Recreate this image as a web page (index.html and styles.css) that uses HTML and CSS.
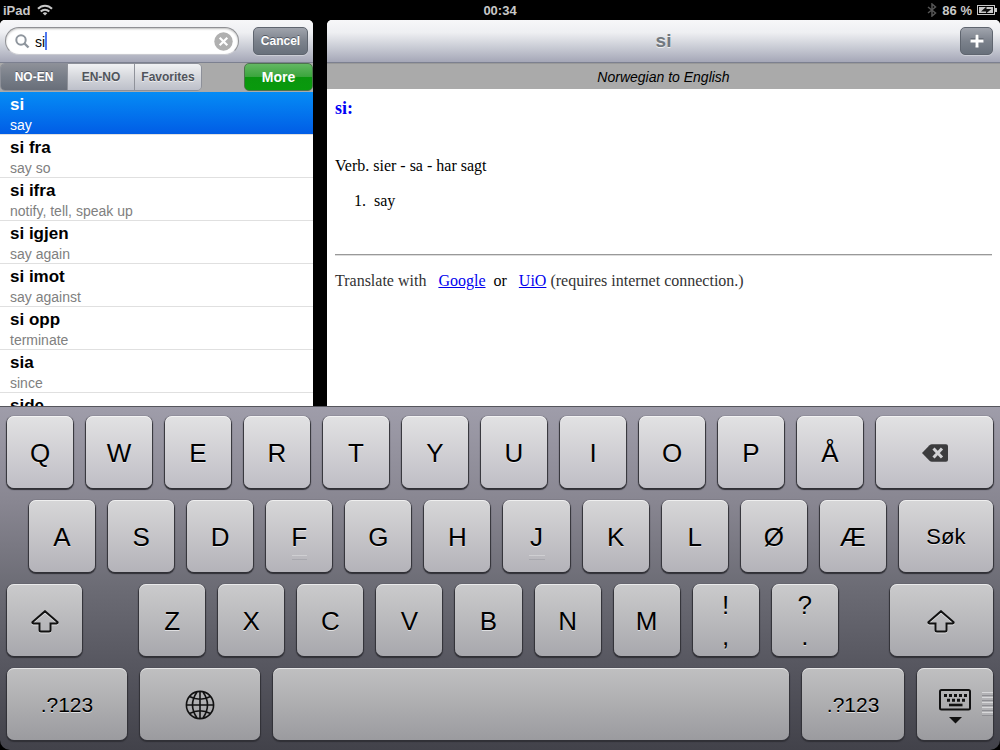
FILE: index.html
```html
<!DOCTYPE html>
<html lang="en">
<head>
<meta charset="utf-8">
<title>Norwegian to English</title>
<link rel="stylesheet" href="styles.css">
</head>
<body>
<div class="status">
  <div class="status-left"><span>iPad</span>
    <svg width="16" height="12" viewBox="0 0 16 12" fill="none" stroke="#c8c8c8" stroke-width="2"><path d="M1 4.800C5 0.600 11 0.600 15 4.800M3.700 7.500C6.200 5 9.800 5 12.300 7.500"/><path d="M8 11.600L5.700 9.300Q8 7.400 10.300 9.300Z" fill="#c8c8c8" stroke="none"/></svg>
  </div>
  <span>00:34</span>
  <div class="status-right">
    <svg width="10" height="14" viewBox="0 0 10 14" fill="none" stroke="#555" stroke-width="1.500"><path d="M1 4L8.500 10L5 13V1L8.500 4L1 10"/></svg>
    <span>86 %</span>
    <svg width="20" height="10" viewBox="0 0 20 10"><rect x=".5" y=".5" width="17" height="9" fill="none" stroke="#c8c8c8"/><path d="M2 2H16V8H2Z" fill="#c8c8c8"/><path d="M18 3h2v4h-2z" fill="#c8c8c8"/><path d="M4 6.500L9.500 1.500V4H14.500L9 8.500V6.500Z" fill="#111"/></svg>
  </div>
</div>

<div class="panes">
  <section class="sidebar">
    <form class="bar search-bar">
      <div class="search">
        <svg width="15" height="15" viewBox="0 0 15 15" fill="none" stroke="#8e959d" stroke-width="2"><circle cx="6" cy="6" r="4.700"/><path d="M9.500 9.500L13.500 13.500" stroke-width="2.400"/></svg>
        <div class="entry"><input type="text" value="si" aria-label="Search"><i class="caret"></i></div>
        <button type="button" class="clear" aria-label="Clear"><svg width="19" height="19" viewBox="0 0 19 19"><circle cx="9.500" cy="9.500" r="9.200" fill="#b0b0b0"/><path d="M5.700 5.700L13.300 13.300M13.300 5.700L5.700 13.300" stroke="#fff" stroke-width="2.200"/></svg></button>
      </div>
      <button type="button" class="dark-button">Cancel</button>
    </form>
    <div class="scopes">
      <div class="segments"><button class="selected">NO-EN</button><button>EN-NO</button><button>Favorites</button></div>
      <button class="more">More</button>
    </div>
    <ul class="words">
      <li class="active"><b>si</b><span>say</span></li>
      <li><b>si fra</b><span>say so</span></li>
      <li><b>si ifra</b><span>notify, tell, speak up</span></li>
      <li><b>si igjen</b><span>say again</span></li>
      <li><b>si imot</b><span>say against</span></li>
      <li><b>si opp</b><span>terminate</span></li>
      <li><b>sia</b><span>since</span></li>
      <li><b>side</b></li>
    </ul>
  </section>

  <main class="detail">
    <header class="bar title-bar"><h1>si</h1><button class="dark-button add" aria-label="Add"><svg width="14" height="14" viewBox="0 0 14 14" stroke-width="3"><path d="M7 -.500V12M.500 6H13.500" stroke="#4f555f"/><path d="M7 .500V13.500M.500 7H13.500" stroke="#fff"/></svg></button></header>
    <div class="direction">Norwegian to English</div>
    <article class="entry-text">
      <h2>si:</h2>
      <p>Verb. sier - sa - har sagt</p>
      <ol><li>say</li></ol>
      <hr>
      <p class="translate">Translate with &nbsp; <a href="#google">Google</a> &nbsp;<span>or</span> &nbsp; <a href="#uio">UiO</a> (requires internet connection.)</p>
    </article>
  </main>
</div>

<div class="desk">
<div class="keyboard">
  <div class="row row1">
    <button>Q</button><button>W</button><button>E</button><button>R</button><button>T</button><button>Y</button><button>U</button><button>I</button><button>O</button><button>P</button><button>Å</button>
    <button class="w117" aria-label="Delete"><svg width="26" height="18" viewBox="0 0 26 18"><path d="M0 9L7.500 1.200Q8.500 .300 10 .300H24Q26 .300 26 2.300V15.700Q26 17.700 24 17.700H10Q8.500 17.700 7.500 16.800Z" fill="#3c3c3e"/><path d="M11.500 4.500L20 13.500M20 4.500L11.500 13.500" stroke="#d2d2d5" stroke-width="3"/></svg></button>
  </div>
  <div class="row row2">
    <button>A</button><button>S</button><button>D</button><button class="bump">F</button><button>G</button><button>H</button><button class="bump">J</button><button>K</button><button>L</button><button>Ø</button><button>Æ</button>
    <button class="w94 small">Søk</button>
  </div>
  <div class="row row3">
    <button class="w75" aria-label="Shift"><svg class="shift" width="28" height="23" viewBox="0 0 28 23"><path d="M14 1.200L26.500 12Q27 13.200 25.500 13.500H19.500V20Q19.500 21.500 18 21.500H10Q8.500 21.500 8.500 20V13.500H2.500Q1 13.200 1.500 12Z"/></svg></button>
    <i class="gap31"></i>
    <button>Z</button><button>X</button><button>C</button><button>V</button><button>B</button><button>N</button><button>M</button><button class="pair"><span>!</span><span>,</span></button><button class="pair"><span>?</span><span>.</span></button>
    <i class="gap26"></i>
    <button class="w103" aria-label="Shift"><svg class="shift" width="28" height="23" viewBox="0 0 28 23"><path d="M14 1.200L26.500 12Q27 13.200 25.500 13.500H19.500V20Q19.500 21.500 18 21.500H10Q8.500 21.500 8.500 20V13.500H2.500Q1 13.200 1.500 12Z"/></svg></button>
  </div>
  <div class="row row4">
    <button class="w120 numeric">.?123</button>
    <button class="w120" aria-label="Next keyboard"><svg width="30" height="30" viewBox="0 0 30 30" fill="none" stroke="#111" stroke-width="1.600"><circle cx="15" cy="15" r="13.600"/><path d="M15 1.400V28.600M1.400 15H28.600M12 2Q3 15 12 28M18 2Q27 15 18 28M4.500 6.500Q15 12 25.500 6.500M4.500 23.500Q15 18 25.500 23.500"/></svg></button>
    <button class="w517" aria-label="Space"></button>
    <button class="w102 numeric">.?123</button>
    <button class="w76 hide" aria-label="Hide keyboard"><svg width="32" height="36" viewBox="0 0 32 36"><rect x="1" y="1" width="30" height="19.500" rx="1.500" fill="none" stroke="#111" stroke-width="2"/><path d="M5 6.500H28M8 11.300H27" stroke="#111" stroke-width="3" stroke-dasharray="3 2"/><path d="M10 16H23.500" stroke="#111" stroke-width="2.600"/><path d="M10 28H23L16.500 34.500Z" fill="#111"/></svg><i class="grip"></i></button>
  </div>
</div>
</div>
</body>
</html>
```
FILE: styles.css
```css
* { box-sizing: border-box; }
body {
  margin: 0;
  height: 100vh;
  display: flex;
  flex-direction: column;
  overflow: hidden;
  background: #000;
  font-family: "Liberation Sans", Arial, sans-serif;
}
button { border: 0; margin: 0; padding: 0; font-family: inherit; color: inherit; }
svg { display: block; }

.status {
  flex: none;
  height: 20px;
  padding: 0 3px;
  display: grid;
  grid-template-columns: 1fr auto 1fr;
  align-items: center;
  color: #c8c8c8;
  font-size: 13px;
  font-weight: bold;
}
.status-left, .status-right { display: flex; align-items: center; gap: 7px; }
.status-right { justify-content: flex-end; gap: 5px; }

.panes { flex: 1; min-height: 0; display: flex; gap: 14px; }
.sidebar {
  width: 313px;
  display: flex;
  flex-direction: column;
  overflow: hidden;
  background: #fff;
  border-radius: 5px 5px 0 0;
}
.detail { flex: 1; background: #fff; border-radius: 5px 5px 0 0; overflow: hidden; }
.bar {
  height: 43px;
  display: flex;
  align-items: center;
  border-bottom: 1px solid #7c8090;
  background: linear-gradient(#f7f7f9, #eeeff2 30%, #c9ccd5 65%, #a5a7b7);
}
.search-bar { flex: none; margin: 0; padding: 0 5px; gap: 14px; }
.search {
  flex: 1;
  height: 28px;
  padding: 0 5px 0 9px;
  display: flex;
  align-items: center;
  gap: 5px;
  border: 1px solid #8f9094;
  border-bottom-color: #c9cad0;
  border-radius: 14px;
  background: #fff;
  box-shadow: inset 0 1px 2px #8888;
}
.entry { flex: 1; position: relative; }
.entry input {
  display: block;
  width: 100%;
  padding: 2px 0 0 0;
  border: 0;
  outline: 0;
  background: none;
  color: #000;
  font: 14px "Liberation Sans", Arial, sans-serif;
}
.caret { position: absolute; left: 10px; top: 0; width: 2px; height: 18px; background: #5078f0; }
.clear { background: none; }
.dark-button {
  width: 55px;
  height: 28px;
  border: 1px solid #5f656f;
  border-radius: 5px;
  background: linear-gradient(#a0a4ad, #7c828c 50%, #68707b);
  box-shadow: 0 1px 0 #ccced6;
  color: #fff;
  font-size: 12px;
  font-weight: bold;
  text-shadow: 0 -1px 0 #555b66;
}
.scopes {
  flex: none;
  height: 29px;
  display: flex;
  justify-content: space-between;
  background: #aaa;
}
.segments {
  width: 202px;
  height: 28px;
  display: flex;
  border: 1px solid #8d9099;
  border-radius: 5px;
  overflow: hidden;
}
.segments button {
  flex: 1;
  border-left: 1px solid #8f929a;
  background: linear-gradient(#f0f1f3, #d5d7dc 50%, #bdc0ca);
  color: #50545c;
  font-size: 12px;
  font-weight: bold;
  text-shadow: 0 1px 0 #eee;
}
.segments .selected {
  border-left: 0;
  background: linear-gradient(#8d9098, #787e88 50%, #686e79);
  color: #fff;
  text-shadow: 0 -1px 0 #555b66;
}
.more {
  width: 69px;
  height: 28px;
  border: 1px solid #4c744c;
  border-radius: 5px;
  background: linear-gradient(#63b763, #3aa53c 50%, #0a960e 51%, #099a0d);
  color: #fff;
  font-size: 14px;
  font-weight: bold;
}
.words { margin: 0; padding: 0; list-style: none; }
.words li {
  height: 43px;
  padding: 3px 10px 0;
  border-bottom: 1px solid #e0e0e0;
}
.words b, .words span { display: block; }
.words b { color: #000; font-size: 17px; line-height: 20px; }
.words span { color: #808080; font-size: 14px; line-height: 20px; }
.words .active { background: linear-gradient(#058cf5, #015de6); }
.words .active b, .words .active span { color: #fff; }

.title-bar { padding: 0 7px; display: grid; grid-template-columns: 33px 1fr 33px; }
.title-bar h1 {
  grid-column: 2;
  margin: 0;
  text-align: center;
  color: #72787f;
  font-size: 19px;
  text-shadow: 0 1px 0 #eee;
}
.add { width: 33px; display: grid; place-items: center; }
.direction {
  height: 26px;
  border-top: 1px solid #999;
  background: #aaa;
  text-align: center;
  font-size: 14px;
  font-style: italic;
  line-height: 26px;
}
.entry-text {
  padding: 9px 8px;
  color: #000;
  font: 16px/18px "Liberation Serif", "Times New Roman", serif;
}
.entry-text h2 { margin: 0 0 39px; color: #0000f5; font-size: 18px; line-height: 20px; }
.entry-text p { margin: 0; }
.entry-text ol { margin: 17px 0 44px; padding-left: 35px; }
.entry-text ol li { padding-left: 4px; }
.entry-text hr { margin: 0 0 16px; border: 0; border-top: 1px solid #999; border-bottom: 1px solid #ddd; }
.entry-text a { color: #0000ee; }
.translate { color: #333; }
.translate span { color: #000; }

.desk { flex: none; background: #000; }
.keyboard {
  padding: 9px 7px 10px;
  display: flex;
  flex-direction: column;
  gap: 12px;
  border-top: 1px solid #55555c;
  border-radius: 0 0 10px 10px;
  background: linear-gradient(#9f9daa, #888691 28%, #6c6c75 52%, #56565f 76%, #42424a);
}
.row { display: flex; gap: 13px; }
.row2 { padding-left: 22px; }
.row button {
  flex: 66 1 0;
  min-width: 0;
  height: 72px;
  padding-top: 2px;
  display: flex;
  align-items: center;
  justify-content: center;
  border-radius: 7px;
  color: #000;
  font-size: 26px;
  text-shadow: 0 1px 0 #fff9;
  box-shadow: inset 0 1px 0 #fff9, 0 1px 1px 1px #303036;
}
.row1 button { background: linear-gradient(#e2e2e3, #bfbec5); }
.row2 button { background: linear-gradient(#d7d7d8, #b4b3b9); }
.row3 button { background: linear-gradient(#cbcbcc, #a8a8ad); }
.row4 button { background: linear-gradient(#c0c0c1, #9b9b9f); }
.row .w75 { flex-grow: 75; }
.row .w76 { flex-grow: 76; }
.row .w94 { flex-grow: 94; }
.row .w102 { flex-grow: 102; }
.row .w103 { flex-grow: 103; }
.row .w117 { flex-grow: 117; }
.row .w120 { flex-grow: 120; }
.row .w517 { flex-grow: 517; }
.gap31 { flex: 31 1 0; }
.gap26 { flex: 26 1 0; }
.row .small { font-size: 22px; }
.row .numeric { font-size: 21px; }
.row .pair { flex-direction: column; gap: 2px; line-height: 29px; }
.row .bump { position: relative; }
.bump::after {
  content: "";
  position: absolute;
  left: 26px;
  right: 25px;
  bottom: 12px;
  height: 3px;
  border-top: 1px solid #cfcfd2;
  border-bottom: 1px solid #a8a8ae;
}
.shift { fill: none; stroke: #111; stroke-width: 2; filter: drop-shadow(0 1px 0 #fff8); }
.row .hide { position: relative; padding-top: 6px; }
.grip {
  position: absolute;
  right: 0;
  top: 24px;
  width: 11px;
  height: 24px;
  background: repeating-linear-gradient(#d8d8da 0 1px, #b2b2b5 1px 3px, #8f8f94 3px 4px, #b2b2b5 4px 5px);
}
```
